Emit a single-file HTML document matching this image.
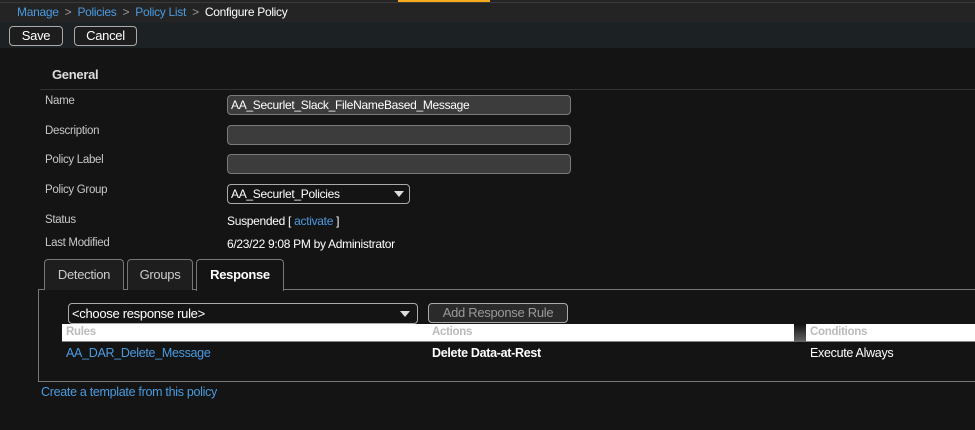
<!DOCTYPE html>
<html><head><style>
*{margin:0;padding:0;box-sizing:border-box}
body{width:975px;height:430px;background:#141414;font-family:"Liberation Sans",sans-serif;font-size:12px;color:#ddd;position:relative;overflow:hidden;letter-spacing:-0.3px}
.a{position:absolute;white-space:nowrap}
.lnk{color:#4a9be0}
.lbl{color:#c8c8c8;font-size:11.5px}
.inp{position:absolute;background:#3c3c3c;border:1px solid #7a7a7a;border-radius:4px;height:20px;color:#fff;padding:2px 3px;font-size:12px}
.btn{position:absolute;border:1px solid #aaa;border-radius:4px;background:#1d1d1d;color:#fff;font-size:13px;text-align:center;height:20px;line-height:18px}
.tab{position:absolute;top:259px;height:31px;border:1px solid #777;border-bottom:none;border-radius:4px 4px 0 0;background:#1e1e1e;color:#ccc;font-size:13px;text-align:center;line-height:29px}
.tri{position:absolute;width:0;height:0;border-left:5px solid transparent;border-right:5px solid transparent;border-top:6px solid #ddd}
</style></head><body>
<div class="a" style="left:0;top:0;width:975px;height:22px;background:#242424"></div>
<div class="a" style="left:0;top:2px;width:975px;height:1px;background:#3a3a3a"></div>
<div class="a" style="left:398px;top:0;width:92px;height:2px;background:#f5aa1c"></div>
<div class="a" style="left:0;top:22px;width:975px;height:26px;background:#1c2224"></div>
<div class="a" style="left:17px;top:5px;font-size:12px"><span class="lnk">Manage</span> <span style="color:#999">&nbsp;&gt;&nbsp;</span> <span class="lnk">Policies</span> <span style="color:#999">&nbsp;&gt;&nbsp;</span> <span class="lnk">Policy List</span> <span style="color:#999">&nbsp;&gt;&nbsp;</span> <span style="color:#fff">Configure Policy</span></div>
<div class="btn" style="left:9px;top:26px;width:54px">Save</div>
<div class="btn" style="left:74px;top:26px;width:63px">Cancel</div>
<div class="a" style="left:52px;top:67px;font-size:13px;font-weight:bold;color:#ddd">General</div>
<div class="a" style="left:40px;top:89px;width:935px;height:1px;background:#2e3438"></div>
<div class="a lbl" style="left:45px;top:95px">Name</div>
<div class="a lbl" style="left:45px;top:125px">Description</div>
<div class="a lbl" style="left:45px;top:154px">Policy Label</div>
<div class="a lbl" style="left:45px;top:184px">Policy Group</div>
<div class="a lbl" style="left:45px;top:214px">Status</div>
<div class="a lbl" style="left:45px;top:237px">Last Modified</div>
<div class="inp" style="left:227px;top:95px;width:344px">AA_Securlet_Slack_FileNameBased_Message</div>
<div class="inp" style="left:227px;top:125px;width:344px"></div>
<div class="inp" style="left:227px;top:154px;width:344px"></div>
<div class="inp" style="left:227px;top:184px;width:183px;background:#141414;border-color:#aaa">AA_Securlet_Policies</div>
<div class="tri" style="left:394px;top:191px"></div>
<div class="a" style="left:227px;top:214px;color:#fff">Suspended [ <span class="lnk">activate</span> ]</div>
<div class="a" style="left:227px;top:237px;color:#fff">6/23/22 9:08 PM by Administrator</div>
<div class="a" style="left:38px;top:289px;width:940px;height:93px;border:1px solid #777;border-right:none"></div>
<div class="tab" style="left:44px;width:80px">Detection</div>
<div class="tab" style="left:127px;width:66px">Groups</div>
<div class="tab" style="left:196px;width:88px;height:32px;background:#141414;color:#fff;font-weight:bold;z-index:2">Response</div>
<div class="inp" style="left:68px;top:303px;width:350px;height:21px;background:#141414;border-color:#aaa;font-size:13px">&lt;choose response rule&gt;</div>
<div class="tri" style="left:400px;top:311px"></div>
<div class="btn" style="left:428px;top:303px;width:140px;background:#2a2a2a;color:#999;font-size:13px">Add Response Rule</div>
<div class="a" style="left:62px;top:324px;width:913px;height:18px;background:#fff;border-bottom:1px solid #888"></div>
<div class="a" style="left:794px;top:324px;width:12px;height:18px;background:linear-gradient(#111,#666)"></div>
<div class="a" style="left:66px;top:326px;color:#bbb;font-weight:bold;font-size:11.5px">Rules</div>
<div class="a" style="left:432px;top:326px;color:#bbb;font-weight:bold;font-size:11.5px">Actions</div>
<div class="a" style="left:810px;top:326px;color:#bbb;font-weight:bold;font-size:11.5px">Conditions</div>
<div class="a lnk" style="left:66px;top:346px;font-size:12.5px">AA_DAR_Delete_Message</div>
<div class="a" style="left:432px;top:346px;font-weight:bold;color:#fff;font-size:12.5px">Delete Data-at-Rest</div>
<div class="a" style="left:810px;top:346px;color:#fff;font-size:12.5px">Execute Always</div>
<div class="a lnk" style="left:41px;top:385px;font-size:12.5px">Create a template from this policy</div>
</body></html>
